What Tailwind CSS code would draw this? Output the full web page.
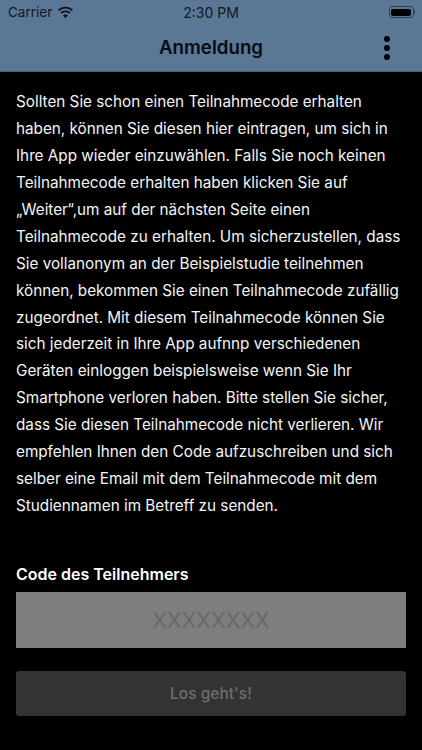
<!DOCTYPE html>
<html lang="de">
<head>
  <meta charset="UTF-8">
  <title>Anmeldung</title>
  <script src="https://cdn.jsdelivr.net/npm/@tailwindcss/browser@4"></script>
</head>
<body class="bg-black h-[750px] w-[422px] overflow-hidden flex flex-col font-['Inter',sans-serif]">
  <!-- Status bar + nav -->
  <header class="bg-[#5b7796] h-[72px] border-b border-[#4a5f78] shrink-0">
    <div class="relative h-[24px] flex items-center justify-between pl-[8px] pr-[7px] text-[#101820] text-[13.5px]">
      <div class="flex items-center gap-[5px]">
        <span>Carrier</span>
        <svg class="w-[17px] h-[13px]" viewBox="0 0 17 13" fill="#0b1118">
          <path d="M8.5 2.6c2.4 0 4.6.9 6.3 2.5l1.2-1.3C14 1.9 11.4.8 8.5.8S3 1.9 1 3.800l1.200 1.300C3.900 3.500 6.100 2.600 8.500 2.600z"/>
          <path d="M8.500 6.300c1.400 0 2.700.5 3.700 1.400l1.300-1.300c-1.400-1.200-3.100-1.900-5-1.900s-3.600.7-5 1.900l1.300 1.300c1-.9 2.300-1.400 3.700-1.400z"/>
          <path d="M8.500 8.500c-1 0-1.800.4-2.500 1l2.500 2.600 2.500-2.600c-.7-.6-1.500-1-2.500-1z"/>
        </svg>
      </div>
      <span class="absolute left-0 right-0 text-center text-[14px]">2:30 PM</span>
      <div class="flex items-center">
        <div class="w-[25px] h-[12px] rounded-[3.500px] border border-[#2f3d4e] p-[1.500px]">
          <div class="w-full h-full rounded-[2px] bg-black"></div>
        </div>
        <div class="w-[1.500px] h-[4px] bg-[#3c4c60] rounded-r"></div>
      </div>
    </div>
    <div class="relative h-[47px] flex items-center justify-center">
      <h1 class="text-[18.700px] font-semibold text-[#080c12] translate-y-[0.500px]">Anmeldung</h1>
      <div class="absolute right-[32px] top-[12px] flex flex-col gap-[3px]">
        <span class="w-[6px] h-[6px] rounded-full bg-black"></span>
        <span class="w-[6px] h-[6px] rounded-full bg-black"></span>
        <span class="w-[6px] h-[6px] rounded-full bg-black"></span>
      </div>
    </div>
  </header>

  <main class="px-[16px] flex-1">
    <p class="mt-[17px] text-[15.280px] leading-[26.930px] text-[#f4f4f4] whitespace-nowrap">
      Sollten Sie schon einen Teilnahmecode erhalten<br>
      haben, können Sie diesen hier eintragen, um sich in<br>
      Ihre App wieder einzuwählen. Falls Sie noch keinen<br>
      Teilnahmecode erhalten haben klicken Sie auf<br>
      „Weiter“,um auf der nächsten Seite einen<br>
      Teilnahmecode zu erhalten. Um sicherzustellen, dass<br>
      Sie vollanonym an der Beispielstudie teilnehmen<br>
      können, bekommen Sie einen Teilnahmecode zufällig<br>
      zugeordnet. Mit diesem Teilnahmecode können Sie<br>
      sich jederzeit in Ihre App aufnnp verschiedenen<br>
      Geräten einloggen beispielsweise wenn Sie Ihr<br>
      Smartphone verloren haben. Bitte stellen Sie sicher,<br>
      dass Sie diesen Teilnahmecode nicht verlieren. Wir<br>
      empfehlen Ihnen den Code aufzuschreiben und sich<br>
      selber eine Email mit dem Teilnahmecode mit dem<br>
      Studiennamen im Betreff zu senden.
    </p>
    <label class="block mt-[44px] text-[16px] leading-[20px] font-semibold text-white">Code des Teilnehmers</label>
    <div class="mt-[8px] h-[56px] bg-[#7e7e7e] flex items-center justify-center text-[21.500px] text-[#686868]">XXXXXXXX</div>
    <button class="mt-[23px] w-full h-[45px] rounded-[3px] bg-[#343233] text-[15.500px] font-medium text-[#6f6f6f]">Los geht's!</button>
  </main>
</body>
</html>
